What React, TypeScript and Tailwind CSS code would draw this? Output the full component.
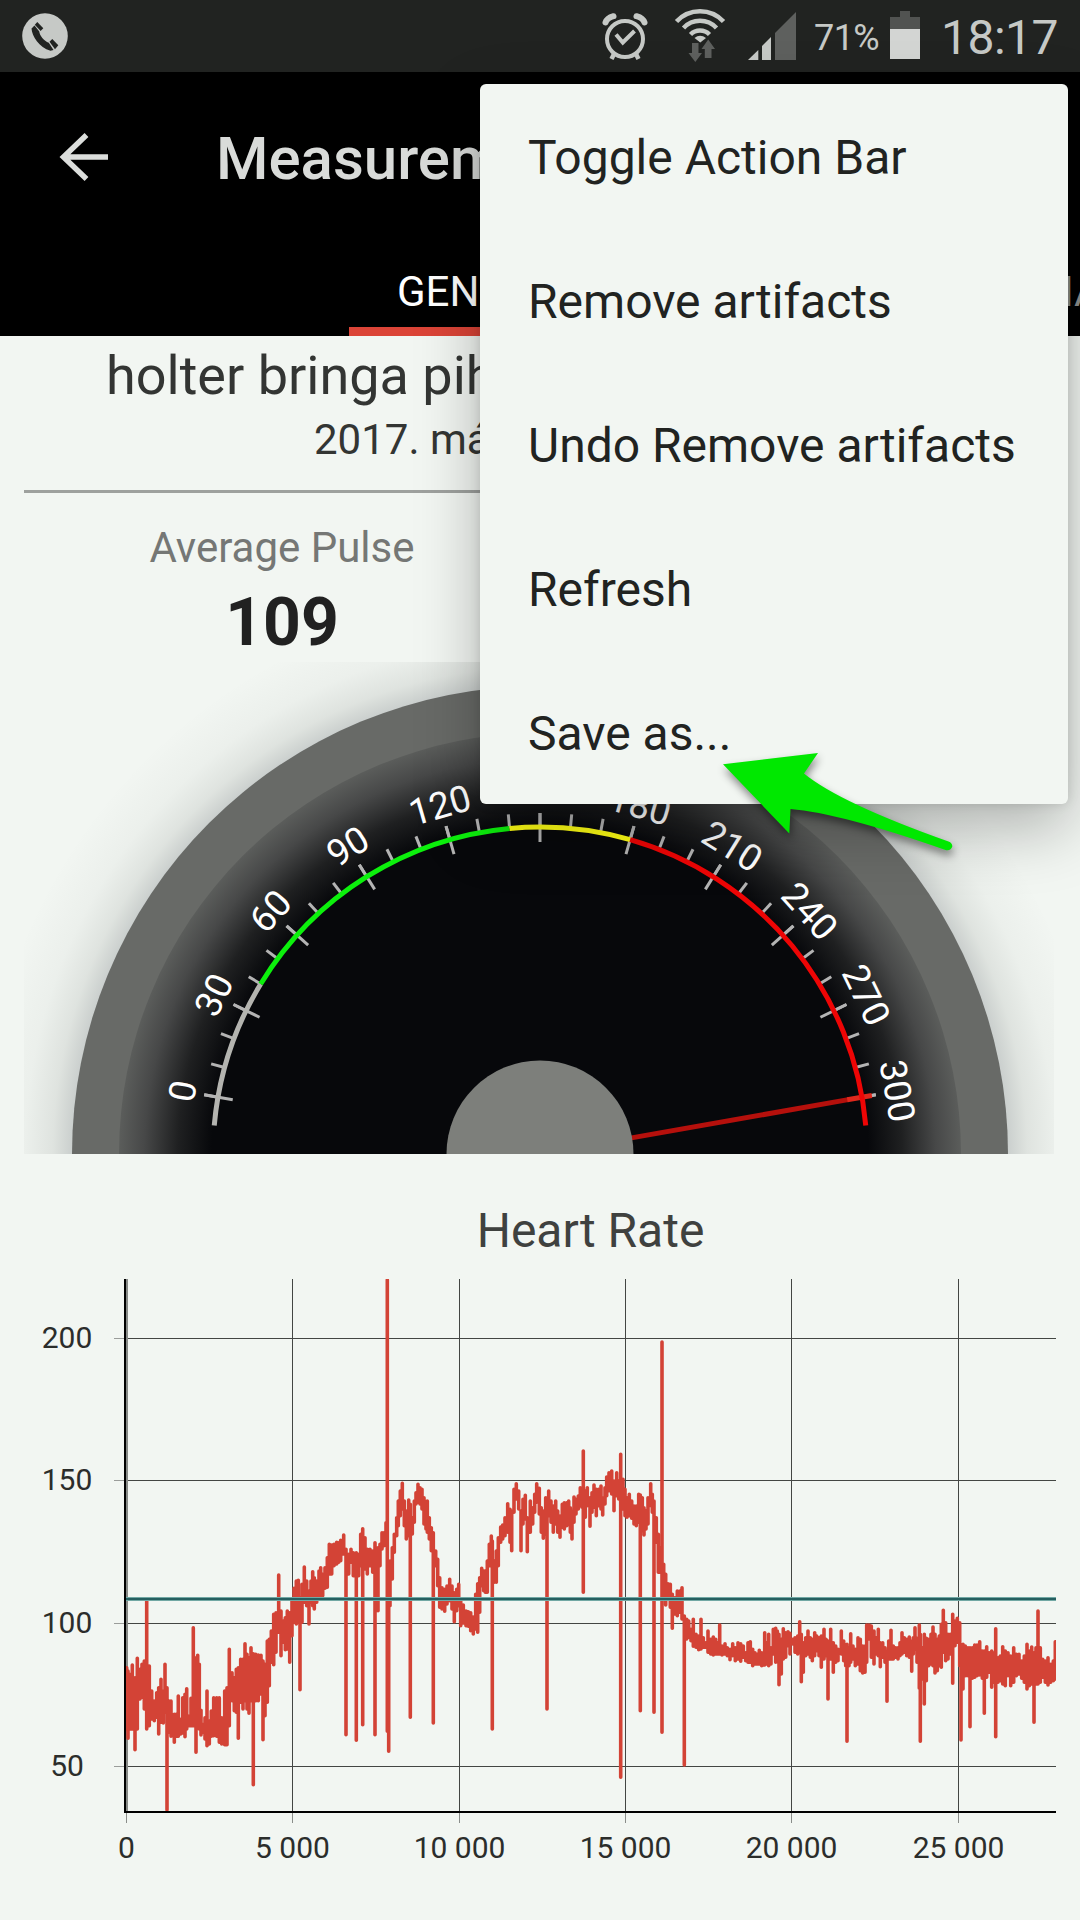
const menuItems = [
  "Toggle Action Bar",
  "Remove artifacts",
  "Undo Remove artifacts",
  "Refresh",
  "Save as...",
];

const GAUGE = { cx: 540, cy: 1153, radius: 327 };

// [x, top, bottom] in thirds of a pixel, grouped by the origin of each segment
const heartRate = [
  {
    x: 100,
    y: 1500,
    samples:
      "80,500,690 84,510,718 92,520,690 97,492,690 105,530,752 112,472,690 120,505,600 126,490,595 133,480,630 140,300,690 148,495,680 155,570,660 163,600,665 170,575,655 176,560,705 183,535,670 190,570,672 195,490,640 201,560,932 207,600,700 213,600,712 223,640,730 229,640,712 235,585,712 242,655,705 248,590,702 255,580,713 260,563,690 268,645,680 273,592,680 280,380,680 288,470,760 293,463,670 298,490,690 303,628,708 310,670,700 315,650,720 321,570,740 328,660,735 334,630,712 341,590,710 350,590,712 358,590,730 365,650,735 374,570,737 381,560,737 388,445,680 396,515,605 403,530,635 409,505,640 415,500,718 422,475,610 429,475,630 435,428,605 441,460,630 447,470,643 453,440,605 460,458,857 467,460,605 475,462,605 483,463,585 489,480,722 495,490,650 502,420,610 508,415,560 514,390,490 521,340,497 528,335,460 536,222,400 543,330,470 550,360,430 556,350,452 562,330,450 569,335,490 576,300,410 582,262,370 589,240,375 595,238,370 600,290,572 606,250,370 613,198,310 620,240,320 627,270,375 633,240,310 638,212,320 643,230,330 650,240,310 657,210,295 662,200,297 668,220,290 675,200,268 682,170,265 688,130,225 695,132,225 702,130,200 710,124,195 716,125,190 722,118,185 731,102,165 738,145,707 746,160,225 753,145,190 760,155,230 769,155,724 776,160,230 782,100,200 788,83,677 795,110,210 802,145,225 810,145,200 818,150,220 825,125,707 834,140,335 840,130,200 846,95,150 852,95,140 858,65,120 862,-663,697 866,180,757 870,180,320 877,140,240 883,100,160 890,50,110 895,0,80 901,-30,50 907,-53,30 913,0,80 919,30,120 926,-3,110 931,10,655 937,50,105 943,0,70 948,-25,15 954,-50,10 960,-40,15 966,-35,30 972,-10,75 978,10,90 982,0,100 988,50,120 994,80,155 1000,95,672 1007,150,200 1013,175,260 1019,230,325 1026,260,330 1034,265,337 1041,255,315 1049,235,305 1056,255,330 1063,275,368 1070,265,335 1076,250,320",
  },
  {
    x: 420,
    y: 1400,
    samples:
      "122,600,680 130,612,672 138,630,680 145,632,682 152,635,695 160,648,705 167,580,690 173,548,700 179,530,640 185,502,560 191,510,575 196,510,580 202,480,580 208,430,500 214,405,470 217,420,990 223,480,550 229,450,550 235,410,500 242,378,430 248,372,420 255,350,410 263,308,400 270,325,430 275,330,455 282,265,340 289,248,300 296,270,330 303,330,455 309,295,375 316,283,360 322,350,458 331,300,400 338,320,375 344,280,340 350,248,310 358,262,345 364,320,400 370,330,418 377,290,405 381,290,930 386,270,350 393,300,370 400,315,400 407,300,375 413,330,400 420,345,415 427,310,385 433,305,390 440,305,380 446,300,365 451,320,400 456,330,420 462,288,370 468,295,345 475,285,330 481,260,320 486,265,325 490,150,580 496,270,355 502,260,320 510,290,382 516,275,340 522,252,325 529,265,350 536,265,320 543,255,330 548,290,348 555,260,315 560,228,290 567,215,275 575,210,285 582,240,335 590,215,290 596,240,300 602,160,1135 609,235,330 615,265,350 621,290,355 628,280,350 635,300,358 642,315,375 649,315,380 656,280,370 661,282,935 667,290,395 672,320,408 678,330,390 684,290,375 692,248,320 697,280,340 702,300,940 709,350,430 715,400,520 720,440,520 726,-177,1000 731,490,590 737,520,618 744,548,600 751,550,625 757,580,688 764,590,645 772,570,650 780,570,640 786,560,660 793,645,1098 800,655,720 806,660,715 813,685,725 820,655,742 828,700,745 836,705,752 843,655,750 850,710,745 857,725,745 864,690,760 872,715,765 880,708,768 887,715,765 893,725,765 899,672,765 906,735,768 915,728,765 922,740,770 930,745,782 938,728,770 946,740,785 954,725,780 962,728,787 970,735,775 977,755,785 984,725,790 991,722,790 998,745,800 1005,755,795 1012,760,795 1018,748,795",
  },
  {
    x: 740,
    y: 1400,
    samples:
      "65,755,800 74,695,798 80,725,795 86,700,800 93,740,795 100,685,765 107,682,790 112,690,780 117,700,857 124,715,825 130,683,780 137,695,775 144,692,740 150,697,765 158,715,735 165,710,760 173,705,765 179,662,745 184,700,848 190,725,820 197,710,770 204,690,765 211,710,775 217,715,785 224,695,770 230,705,755 237,710,770 244,705,805 252,685,780 258,715,770 264,720,900 272,685,780 280,725,820 287,735,790 294,745,785 304,690,765 311,720,785 317,740,800 321,730,1027 327,740,800 332,698,790 339,735,780 346,745,800 354,710,795 361,715,815 368,735,822 375,735,820 380,672,790 387,672,720 394,675,775 402,690,795 409,710,765 415,685,770 421,725,803 428,725,775 435,740,790 441,750,907 446,720,780 453,688,780 460,735,780 467,740,775 474,740,780 480,725,770 486,695,765 493,710,760 500,715,770 508,708,775 515,720,817 520,710,765 525,680,750 531,712,790 538,672,868 541,700,1027 547,740,840 553,700,915 559,712,845 566,715,800 573,700,795 579,678,800 585,700,822 592,715,815 598,705,800 604,670,805 610,628,760 617,665,785 624,700,780 631,700,765 638,640,853 645,660,740 652,652,730 659,665,800 663,740,1023 669,730,870 676,735,830 684,740,830 690,740,983 697,740,838 704,732,835 711,732,830 719,722,828 727,750,838 733,750,943 740,737,835 748,755,820 755,750,865 762,755,850 767,683,1013 774,770,850 781,765,845 788,737,855 796,750,860 804,755,830 812,765,860 821,740,850 829,760,830 837,760,825 845,780,838 853,765,850 861,730,870 868,750,860 875,738,855 882,755,970 888,740,855 894,630,855 901,740,850 908,775,835 916,780,850 924,770,858 932,790,850 940,780,845 946,722,840",
  },
];

const heartRatePath = heartRate
  .flatMap(({ x, y, samples }) =>
    samples.split(" ").map((sample) => {
      const [sx, top, bottom] = sample.split(",").map(Number);
      return `M${(x + sx / 3).toFixed(1)} ${(y + top / 3 + 1).toFixed(1)}V${(y + bottom / 3 - 1).toFixed(1)}`;
    })
  )
  .join("");

// 0 sits 10 degrees above the left horizon, 300 the same on the right
const valueToAngle = (value: number) => 10 + (value / 300) * 160;

const polar = (angle: number, radius: number) => {
  const rad = (angle * Math.PI) / 180;
  return [
    GAUGE.cx - radius * Math.cos(rad),
    GAUGE.cy - radius * Math.sin(rad),
  ];
};

const arcPath = (from: number, to: number) => {
  const [x1, y1] = polar(from, GAUGE.radius);
  const [x2, y2] = polar(to, GAUGE.radius);
  return `M${x1} ${y1}A${GAUGE.radius} ${GAUGE.radius} 0 0 1 ${x2} ${y2}`;
};

const GaugeLine = ({
  angle,
  from,
  to,
  stroke,
  width,
}: {
  angle: number;
  from: number;
  to: number;
  stroke: string;
  width: number;
}) => {
  const [x1, y1] = polar(angle, from);
  const [x2, y2] = polar(angle, to);
  return (
    <line x1={x1} y1={y1} x2={x2} y2={y2} stroke={stroke} strokeWidth={width} />
  );
};

const StatusBar = () => (
  <div className="flex h-[72px] items-center bg-[#212321] text-[#c6c9c6]">
    <svg className="ml-[22px] h-[72px] w-[46px]" viewBox="22 0 46 72">
      <circle cx="45" cy="36" r="22.8" fill="#c6c9c6" />
      <g fill="#212321">
        <path d="M31.5 28.5C32 36 39 47.500 50.500 50.800L53.500 50L48.800 42.800C44 41 39.500 35.500 39.300 31.500L34.500 25.500Z" />
        <path d="M34.800 24.700L37.300 22L43.300 28.300L40.600 31Z" />
        <path d="M49.500 41.800L52.300 39L58.300 45.200L55 49.200Z" />
      </g>
    </svg>
    <svg className="ml-[530px] h-[72px] w-[202px]" viewBox="598 0 202 72">
      <g fill="none" stroke="#c6c9c6">
        <circle cx="625" cy="39" r="18" strokeWidth="4" />
        <path d="M616 34.500L622.800 42.500L634.500 31" strokeWidth="4" />
        <path d="M605.500 22.500Q607 18 613.500 16.200M644.500 22.500Q643 18 636.500 16.200" strokeWidth="6" strokeLinecap="round" />
        <path d="M614 54L611.500 59M636 54L638.500 59" strokeWidth="4.500" />
      </g>
      <g fill="none" stroke="#c6c9c6" strokeWidth="4.500">
        <path d="M676.500 21.500A32 32 0 0 1 723.500 21.500" />
        <path d="M683.500 28A22.500 22.500 0 0 1 716.500 28" />
        <path d="M690.500 34.500A13.500 13.500 0 0 1 709.500 34.500" />
      </g>
      <path d="M694.500 38Q700 33.500 706 38L700.300 42.500Z" fill="#c6c9c6" />
      <path d="M692 43H698.500V53H702L695.300 62L688.500 53H692Z" fill="#5e605e" />
      <path d="M704.800 58H711.500V49H715L708.200 39.500L701.500 49H704.800Z" fill="#5e605e" />
      <path d="M748 60L758.300 50V60Z" fill="#c6c9c6" />
      <path d="M762 60V46L771 37V60Z" fill="#c6c9c6" />
      <path d="M775 60V33L796 12V60Z" fill="#5e605e" />
    </svg>
    <span className="ml-[14px] w-[70px] pt-[4px] text-[36px] tracking-[-0.6px]">71%</span>
    <svg className="ml-[6px] h-[72px] w-[30px]" viewBox="890 0 30 72">
      <path d="M900 11H910V17H920V30H890V17H900Z" fill="#515351" />
      <path d="M890 29H920V59H890Z" fill="#d3d5d3" />
    </svg>
    <span className="ml-[21px] pt-[3px] text-[48px] tracking-[-0.5px]">18:17</span>
  </div>
);

const AppBar = () => (
  <header className="overflow-hidden bg-black">
    <div className="flex h-[174px] items-center">
      <svg className="mb-1 ml-[58px] h-[50px] w-[52px]" viewBox="58 131 52 50">
        <path d="M86.500 134L63.500 156L86.500 178M62.500 156H108" fill="none" stroke="#dcdedc" strokeWidth="5.500" />
      </svg>
      <h1 className="ml-[106px] text-[60px] font-medium text-[#d9dbd9]">Measurement</h1>
    </div>
    <nav className="flex h-[90px] pl-[349px] text-[42px] leading-[92px]">
      <div className="relative px-12 text-white">
        GENERAL
        <span className="absolute inset-x-0 bottom-0 h-[9px] bg-[#db4437]" />
      </div>
      <div className="mr-[-48px] ml-auto text-[#8f918f]">MAP</div>
    </nav>
  </header>
);

const OverflowMenu = () => (
  <ul className="absolute top-[84px] left-[480px] h-[720px] w-[588px] rounded-[6px] bg-[#f2f6f2] pt-[2px] shadow-[0_24px_64px_rgba(0,0,0,0.28),0_0_12px_rgba(0,0,0,0.12)]">
    {menuItems.map((item) => (
      <li key={item} className="h-[144px] pl-12 text-[48px] leading-[144px] text-[#212321]">
        {item}
      </li>
    ))}
  </ul>
);

const PulseGauge = () => {
  const minorTicks = Array.from({ length: 31 }, (_, i) => i * 10);
  const majorTicks = minorTicks.filter((value) => value % 30 === 0);

  return (
    <svg className="ml-6 h-[492px] w-[1030px]" viewBox="24 661 1030 492">
      <defs>
        <radialGradient id="halo" gradientUnits="userSpaceOnUse" cx="540" cy="1153" r="560">
          <stop offset="0.83" stopColor="#1c2430" stopOpacity="0.2" />
          <stop offset="0.87" stopColor="#1c2420" stopOpacity="0.09" />
          <stop offset="0.92" stopColor="#1c2420" stopOpacity="0.03" />
          <stop offset="1" stopColor="#1c2420" stopOpacity="0" />
        </radialGradient>
        <radialGradient id="face" gradientUnits="userSpaceOnUse" cx="540" cy="1153" r="421">
          <stop offset="0.78" stopColor="#07080b" />
          <stop offset="0.86" stopColor="#1f2021" />
          <stop offset="0.94" stopColor="#474848" />
          <stop offset="1" stopColor="#5b5d5b" />
        </radialGradient>
      </defs>
      <rect x="24" y="661" width="1030" height="492" fill="url(#halo)" />
      <circle cx="540" cy="1153" r="468" fill="#686a67" />
      <circle cx="540" cy="1153" r="421" fill="url(#face)" />
      {minorTicks.map((value) => (
        <GaugeLine key={value} angle={valueToAngle(value)} from={327} to={341} stroke="#b4b4b4" width={3} />
      ))}
      {majorTicks.map((value) => (
        <GaugeLine key={value} angle={valueToAngle(value)} from={312} to={341} stroke="#b4b4b4" width={3} />
      ))}
      <g fill="none" strokeWidth="5">
        <path d={arcPath(5, valueToAngle(40))} stroke="#b4b4b0" />
        <path d={arcPath(valueToAngle(40), valueToAngle(140))} stroke="#0cf00c" />
        <path d={arcPath(valueToAngle(140), valueToAngle(180))} stroke="#ffff14" />
      </g>
      <GaugeLine angle={170} from={90} to={313} stroke="#b5100c" width={5} />
      <GaugeLine angle={170} from={312} to={337} stroke="#e0281c" width={5} />
      <path d={arcPath(valueToAngle(180), 175)} stroke="#ee0505" strokeWidth="5" fill="none" />
      {majorTicks.map((value) => (
        <text
          key={value}
          x="540"
          y={GAUGE.cy - 350}
          textAnchor="middle"
          fontSize="37"
          fill="#fff"
          transform={`rotate(${valueToAngle(value) - 90} ${GAUGE.cx} ${GAUGE.cy})`}
        >
          {value}
        </text>
      ))}
      <circle cx="540" cy="1153" r="93.500" fill="#7d7f7b" />
    </svg>
  );
};

const HeartRateChart = () => {
  const rows = [
    { label: "200", y: 1338.5 },
    { label: "150", y: 1480.5 },
    { label: "100", y: 1623.5 },
    { label: "50", y: 1766.5 },
  ];
  const columns = [
    { label: "0", x: 126.5 },
    { label: "5 000", x: 292.5 },
    { label: "10 000", x: 459.5 },
    { label: "15 000", x: 625.5 },
    { label: "20 000", x: 791.5 },
    { label: "25 000", x: 958.5 },
  ];

  return (
    <svg className="h-[665px] w-[1080px]" viewBox="0 1255 1080 665">
      <clipPath id="plot">
        <rect x="126" y="1279" width="930" height="532" />
      </clipPath>
      {rows.map(({ label, y }) => (
        <g key={label}>
          <path d={`M114 ${y}H125`} stroke="#9a9d9a" />
          <path d={`M126 ${y}H1056`} stroke="#434643" />
          <text x={67} y={y + 9.5} textAnchor="middle" fontSize="30" fill="#2b2d2b">
            {label}
          </text>
        </g>
      ))}
      {columns.map(({ label, x }) => (
        <g key={label}>
          <path d={`M${x} 1279V1812`} stroke="#434643" />
          <path d={`M${x} 1813V1823`} stroke="#8a8d8a" />
          <text x={x} y="1858" textAnchor="middle" fontSize="30" fill="#2b2d2b">
            {label}
          </text>
        </g>
      ))}
      <path d="M127 1279V1812" stroke="#878a87" strokeWidth="2" />
      <path d={heartRatePath} clipPath="url(#plot)" fill="none" stroke="#d34336" strokeWidth="3.6" strokeLinecap="round" />
      <path d="M126 1599H1056" stroke="#72a8a4" strokeWidth="4" />
      <path d="M126 1599H1056" stroke="#265f60" strokeWidth="2" />
      <path d="M125 1279V1812H1056" fill="none" stroke="#000" strokeWidth="2" />
    </svg>
  );
};

const PointerArrow = () => (
  <svg
    className="absolute top-[740px] left-[710px] h-[130px] w-[260px] drop-shadow-[1px_5px_4px_rgba(0,0,0,0.45)]"
    viewBox="710 740 260 130"
  >
    <path
      d="M723 764.300L818 753L804 773.500Q840 803 948.500 841.500Q952.500 843 952.300 846.500Q951 851 945.500 850Q840 813 790.500 809L789.300 833.500Z"
      fill="#00e800"
    />
  </svg>
);

export default function App() {
  return (
    <div className="relative h-[1920px] w-[1080px] overflow-hidden bg-[#f2f6f2] font-[Roboto,sans-serif]">
      <StatusBar />
      <AppBar />
      <main>
        <div className="pl-[106px] text-[54px] leading-[79px] whitespace-nowrap text-[#333533]">
          holter bringa pihenő
        </div>
        <div className="pl-[314px] text-[42px] leading-[49px] text-[#333533]">2017. március</div>
        <hr className="mx-6 mt-[26px] h-[3px] border-0 bg-[#9ea19e]" />
        <section className="ml-6 w-[516px] pt-[30px] text-center">
          <div className="text-[42px] leading-[49px] text-[#757775]">Average Pulse</div>
          <div className="mt-[12px] text-[66px] leading-[78px] font-bold text-[#212121]">109</div>
        </section>
        <PulseGauge />
        <h2 className="mt-[53px] pl-[101px] text-center text-[48px] leading-[48px] text-[#3f413f]">
          Heart Rate
        </h2>
        <HeartRateChart />
      </main>
      <OverflowMenu />
      <PointerArrow />
    </div>
  );
}
